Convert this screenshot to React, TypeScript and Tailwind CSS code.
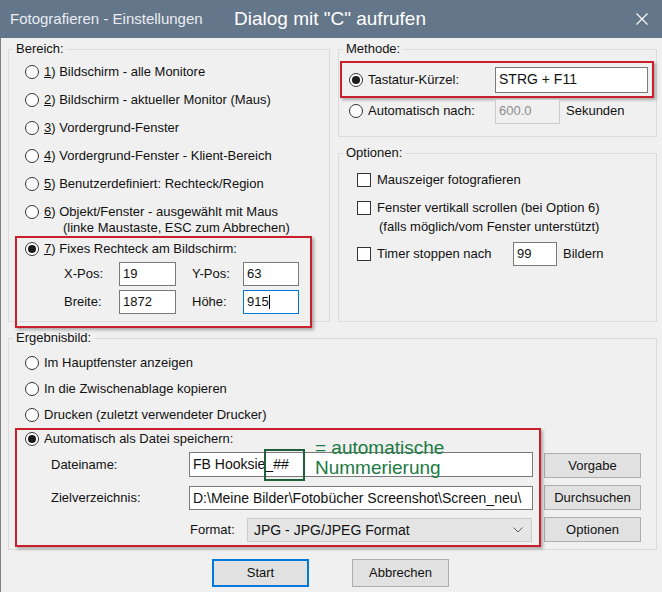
import React from 'react'

const Radio = ({ checked = false }: { checked?: boolean }) => (
  <span className="w-[14px] h-[14px] shrink-0 rounded-full border border-[#333333] bg-white flex items-center justify-center">
    {checked && <span className="w-[8px] h-[8px] rounded-full bg-[#1a1a1a]" />}
  </span>
)

const Check = () => <span className="block w-[14px] h-[14px] shrink-0 border border-[#333333] bg-white" />

const TextBox = ({ value, className = '' }: { value: React.ReactNode; className?: string }) => (
  <div className={`bg-white border border-[#7a7a7a] flex items-center pl-[3px] whitespace-nowrap overflow-hidden ${className}`}>
    {value}
  </div>
)

const Btn = ({ label, primary = false }: { label: string; primary?: boolean }) => (
  <div
    className={`w-[97px] flex items-center justify-center bg-[#e1e1e1] ${
      primary ? 'h-[28px] border-2 border-[#0078d7]' : 'h-[25px] border border-[#adadad]'
    }`}
  >
    {label}
  </div>
)

const GroupBox = ({ title, className, children }: { title: string; className: string; children: React.ReactNode }) => (
  <fieldset className={`border border-[#dcdcdc] ${className}`}>
    <legend className="ml-[4px] px-[3px] leading-[18px]">{title}</legend>
    {children}
  </fieldset>
)

const RadioRow = ({ n, text, checked = false }: { n?: string; text: string; checked?: boolean }) => (
  <div className="flex items-center gap-[5px]">
    <Radio checked={checked} />
    <span className="whitespace-nowrap">
      {n && (
        <>
          <span className="underline">{n}</span>)
        </>
      )}{' '}
      {text}
    </span>
  </div>
)

export default function App() {
  return (
    <div className="w-[662px] h-[592px] overflow-hidden bg-[#f0f0f0] text-[13px] text-[#111111] font-['Liberation_Sans',Arial,sans-serif]">
      {/* title bar */}
      <div className="h-[38px] bg-[#64768a] flex items-center pl-[10px] pr-[14px]">
        <span className="w-[224px] text-[15px] text-[#e9edf1] whitespace-nowrap">Fotografieren - Einstellungen</span>
        <span className="text-[19px] text-white whitespace-nowrap">Dialog mit "C" aufrufen</span>
        <svg className="ml-auto" width="12" height="12" viewBox="0 0 12 12">
          <path d="M0.5 0.5 L11.5 11.5 M11.5 0.5 L0.5 11.5" stroke="#ffffff" strokeWidth="1.1" fill="none" />
        </svg>
      </div>

      <div className="h-[554px] border-l border-[#7f7f7f] pl-[7px] pt-[2px]">
        <div className="flex gap-[8px]">
          {/* Bereich */}
          <GroupBox title="Bereich:" className="w-[322px] h-[282px]">
            <div className="pl-[16px]">
              {[
                ['1', 'Bildschirm - alle Monitore'],
                ['2', 'Bildschirm - aktueller Monitor (Maus)'],
                ['3', 'Vordergrund-Fenster'],
                ['4', 'Vordergrund-Fenster - Klient-Bereich'],
                ['5', 'Benutzerdefiniert: Rechteck/Region'],
              ].map(([n, t]) => (
                <div key={n} className="h-[28px] flex items-center">
                  <RadioRow n={n} text={t} />
                </div>
              ))}
              <div className="h-[38px] pt-[6px] flex items-start gap-[5px]">
                <span className="mt-[1px]">
                  <Radio />
                </span>
                <div className="leading-[16px] whitespace-nowrap">
                  <div>
                    <span className="underline">6</span>) Objekt/Fenster - ausgewählt mit Maus
                  </div>
                  <div className="pl-[19px]">(linke Maustaste, ESC zum Abbrechen)</div>
                </div>
              </div>
            </div>
            <div className="ml-[6px] w-[297px] h-[92px] border-2 border-[#c9202c] shadow-[2px_2px_3px_rgba(0,0,0,0.3)]">
              <div className="h-[22px] flex items-center pl-[8px]">
                <RadioRow n="7" text="Fixes Rechteck am Bildschirm:" checked />
              </div>
              <div className="mt-[2px] pl-[47px] grid grid-cols-[55px_57px_16px_51px_56px] grid-rows-[24px_24px] gap-y-[4px] items-center">
                <span>X-Pos:</span>
                <TextBox value="19" className="h-[24px]" />
                <span />
                <span>Y-Pos:</span>
                <TextBox value="63" className="h-[24px]" />
                <span>Breite:</span>
                <TextBox value="1872" className="h-[24px]" />
                <span />
                <span>Höhe:</span>
                <div className="h-[24px] bg-white border border-[#0078d7] flex items-center pl-[3px]">
                  915<span className="w-px h-[14px] bg-black" />
                </div>
              </div>
            </div>
          </GroupBox>

          {/* right column */}
          <div className="w-[319px] flex flex-col gap-[7px]">
            <GroupBox title="Methode:" className="h-[97px]">
              <div className="mt-[3px] ml-[1px] w-[314px] h-[37px] border-2 border-[#c9202c] shadow-[2px_2px_3px_rgba(0,0,0,0.3)] flex items-center pl-[7px]">
                <div className="w-[146px] flex items-center gap-[5px]">
                  <Radio checked />
                  <span>Tastatur-Kürzel:</span>
                </div>
                <TextBox value="STRG + F11" className="w-[153px] h-[26px] text-[14px]" />
              </div>
              <div className="h-[26px] flex items-center pl-[10px]">
                <div className="w-[146px] flex items-center gap-[5px]">
                  <Radio />
                  <span>Automatisch nach:</span>
                </div>
                <div className="w-[65px] h-[25px] border border-[#cccccc] bg-[#f0f0f0] text-[#8d8d8d] flex items-center pl-[3px]">
                  600.0
                </div>
                <span className="ml-[6px]">Sekunden</span>
              </div>
            </GroupBox>

            <GroupBox title="Optionen:" className="h-[178px]">
              <div className="pl-[18px]">
                <div className="mt-[8px] h-[20px] flex items-center gap-[6px]">
                  <Check />
                  <span>Mauszeiger fotografieren</span>
                </div>
                <div className="mt-[8px] flex items-start gap-[6px]">
                  <span className="mt-[3px] flex">
                    <Check />
                  </span>
                  <div className="whitespace-nowrap">
                    <div className="leading-[20px]">Fenster vertikall scrollen (bei Option 6)</div>
                    <div className="leading-[18px] pl-[2px]">(falls möglich/vom Fenster unterstützt)</div>
                  </div>
                </div>
                <div className="mt-[6px] h-[24px] flex items-center gap-[6px]">
                  <Check />
                  <span className="w-[130px]">Timer stoppen nach</span>
                  <TextBox value="99" className="w-[44px] h-[24px]" />
                  <span>Bildern</span>
                </div>
              </div>
            </GroupBox>
          </div>
        </div>

        {/* Ergebnisbild */}
        <GroupBox title="Ergebnisbild:" className="mt-[7px] w-[649px] h-[221px]">
          <div className="mt-[3px] pl-[16px]">
            <div className="h-[26px] flex items-center">
              <RadioRow text="Im Hauptfenster anzeigen" />
            </div>
            <div className="h-[26px] flex items-center">
              <RadioRow text="In die Zwischenablage kopieren" />
            </div>
            <div className="h-[26px] flex items-center">
              <RadioRow text="Drucken (zuletzt verwendeter Drucker)" />
            </div>
          </div>
          <div className="flex">
            <div className="relative ml-[6px] w-[526px] h-[119px] border-2 border-[#c9202c] shadow-[2px_2px_3px_rgba(0,0,0,0.3)]">
              <div className="h-[18px] flex items-center pl-[8px]">
                <RadioRow text="Automatisch als Datei speichern:" checked />
              </div>
              <div className="mt-[4px] h-[25px] flex items-center">
                <span className="w-[172px] pl-[34px]">Dateiname:</span>
                <TextBox value="FB Hooksie_##" className="w-[344px] h-[25px] text-[14px]" />
              </div>
              <div className="mt-[9px] h-[24px] flex items-center">
                <span className="w-[172px] pl-[34px]">Zielverzeichnis:</span>
                <TextBox
                  value="D:\Meine Bilder\Fotobücher Screenshot\Screen_neu\"
                  className="w-[344px] h-[24px] text-[14px]"
                />
              </div>
              <div className="mt-[8px] h-[24px] flex items-center">
                <span className="w-[173px]" />
                <span className="w-[57px]">Format:</span>
                <div className="w-[285px] h-[24px] bg-[#e5e5e5] border border-[#cccccc] flex items-center pl-[6px] pr-[8px] text-[14px]">
                  <span>JPG - JPG/JPEG Format</span>
                  <svg className="ml-auto" width="10" height="6" viewBox="0 0 10 6">
                    <path d="M0.5 0.5 L5 5 L9.5 0.5" stroke="#606060" strokeWidth="1" fill="none" />
                  </svg>
                </div>
              </div>

              {/* annotation */}
              <div className="absolute left-[247px] top-[19px] w-[41px] h-[32px] border-2 border-[#1f5f3c]" />
              <div className="absolute left-[298px] top-[8px] text-[19px] leading-[20px] text-[#207a44] whitespace-nowrap">
                <div>= automatische</div>
                <div>Nummerierung</div>
              </div>
            </div>
            <div className="ml-[3px] pt-[25px] flex flex-col gap-[7px]">
              <Btn label="Vorgabe" />
              <Btn label="Durchsuchen" />
              <Btn label="Optionen" />
            </div>
          </div>
        </GroupBox>

        <div className="mt-[9px] flex pl-[204px] gap-[43px]">
          <Btn label="Start" primary />
          <div className="w-[97px] h-[28px] flex items-center justify-center bg-[#e1e1e1] border border-[#adadad]">Abbrechen</div>
        </div>
      </div>
    </div>
  )
}
